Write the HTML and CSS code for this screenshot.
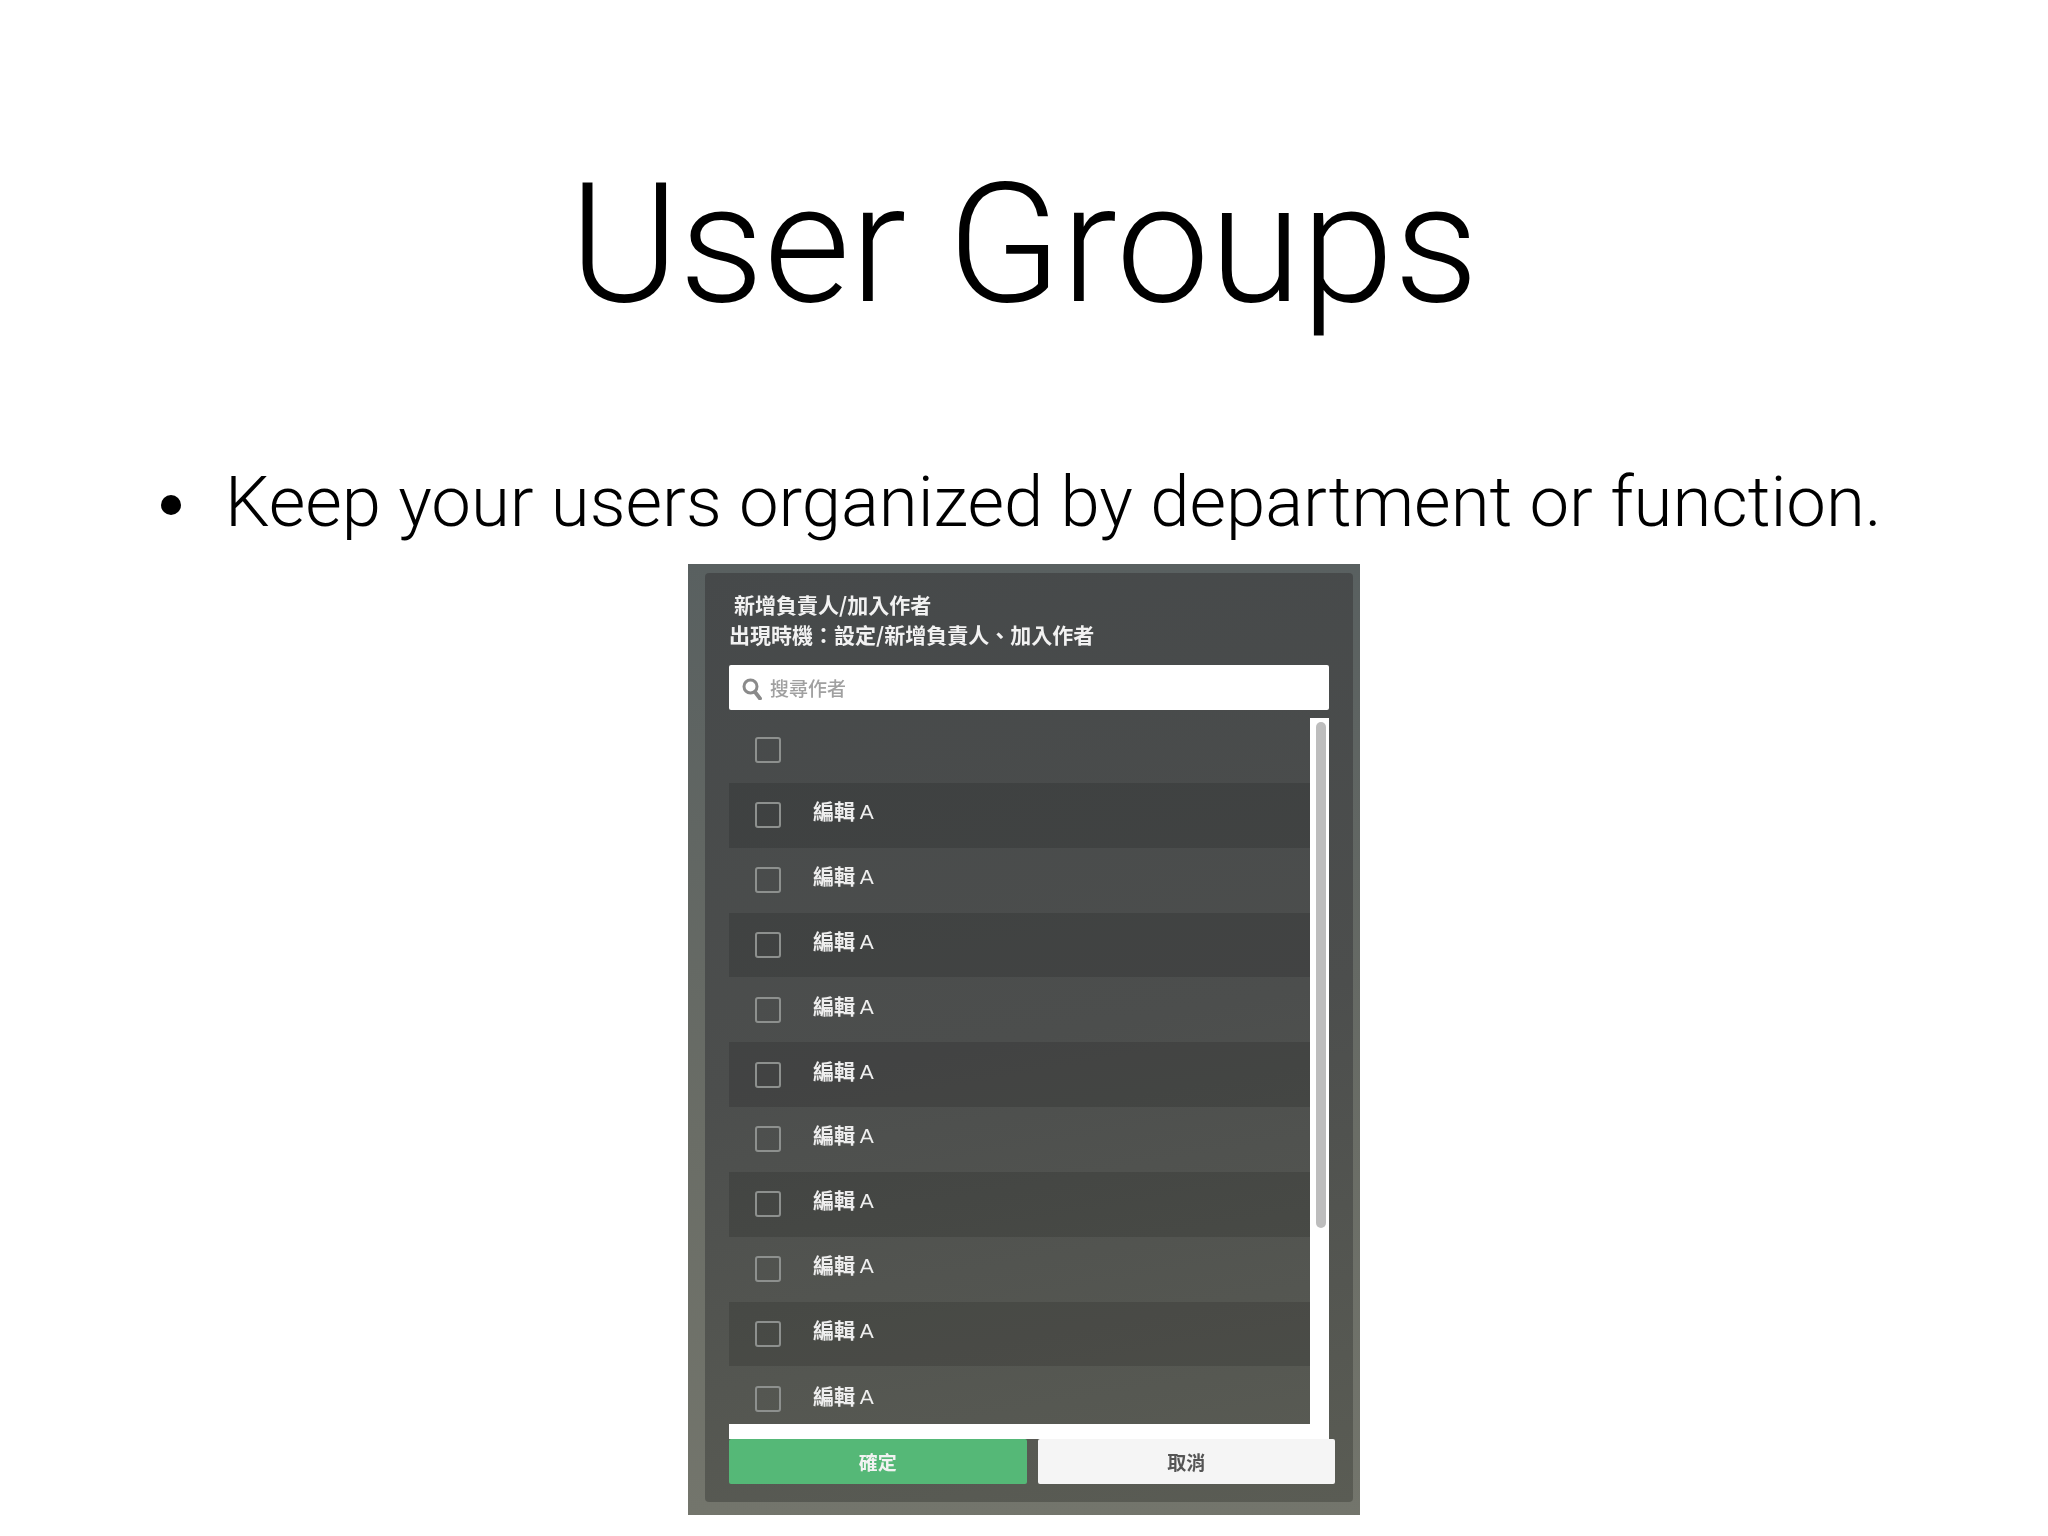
FILE: index.html
```html
<!doctype html>
<html>
  <head>
    <meta charset="utf-8" />
    <title>User Groups</title>
    <link rel="stylesheet" href="styles.css">
  </head>
  <body>
    <div class="slide">
      <h1 class="title">User Groups</h1>
      <ul class="points">
        <li>Keep your users organized by department or function.</li>
      </ul>
      <div class="shot">
        <div class="dialog">
          <p class="dialog-title">新增負責人/加入作者</p>
          <p class="dialog-note">出現時機：設定/新增負責人、加入作者</p>
          <div class="search">
            <svg class="search-icon" viewBox="0 0 20 22" width="20" height="22">
              <circle cx="8.5" cy="8.5" r="6.5" fill="none" stroke="#8a8a8a" stroke-width="3"/>
              <path d="M13 14l5 6.5" fill="none" stroke="#8a8a8a" stroke-width="3.8" stroke-linecap="round"/>
            </svg>
            <span>搜尋作者</span>
          </div>
          <div class="list">
            <div class="rows">
              <div class="row"><span class="check"></span></div>
              <div class="row dark"><span class="check"></span><span class="name">編輯 <span class="latin">A</span></span></div>
              <div class="row"><span class="check"></span><span class="name">編輯 <span class="latin">A</span></span></div>
              <div class="row dark"><span class="check"></span><span class="name">編輯 <span class="latin">A</span></span></div>
              <div class="row"><span class="check"></span><span class="name">編輯 <span class="latin">A</span></span></div>
              <div class="row dark"><span class="check"></span><span class="name">編輯 <span class="latin">A</span></span></div>
              <div class="row"><span class="check"></span><span class="name">編輯 <span class="latin">A</span></span></div>
              <div class="row dark"><span class="check"></span><span class="name">編輯 <span class="latin">A</span></span></div>
              <div class="row"><span class="check"></span><span class="name">編輯 <span class="latin">A</span></span></div>
              <div class="row dark"><span class="check"></span><span class="name">編輯 <span class="latin">A</span></span></div>
              <div class="row last"><span class="check"></span><span class="name">編輯 <span class="latin">A</span></span></div>
            </div>
            <div class="scrollbar"><div class="thumb"></div></div>
          </div>
          <div class="list-end"></div>
          <div class="buttons">
            <div class="btn ok">確定</div>
            <div class="btn cancel">取消</div>
          </div>
        </div>
      </div>
    </div>
  </body>
</html>
```

FILE: styles.css
```css
* { margin: 0; padding: 0; box-sizing: border-box; }
body { background: #fff; color: #000; font-family: Roboto, "Liberation Sans", sans-serif; }
.slide { width: 2048px; height: 1536px; overflow: hidden; padding-top: 149px; }
.title { font-size: 167px; font-weight: 300; line-height: 190px; text-align: center; }
.points { list-style: none; margin-top: 119px; padding-left: 158px; }
.points li { font-size: 70.7px; font-weight: 300; line-height: 88px; position: relative; padding-left: 67px; }
.points li::before { content: ""; position: absolute; left: 3px; top: 37px; width: 20px; height: 20px; border-radius: 50%; background: #000; }

.shot {
  width: 672px;
  height: 951px;
  margin: 18px 0 0 688px;
  padding: 9px 7px 13px 17px;
  background: linear-gradient(180deg, #596060 0%, #6a6d66 60%, #73756c 100%);
  filter: blur(0.7px);
}
.dialog {
  height: 100%;
  padding: 16px 24px 0;
  border-radius: 4px;
  background: linear-gradient(170deg, #46494a 0%, #4c4e4d 50%, #5a5c54 100%);
  color: #fff;
  font-family: "Noto Sans CJK TC", sans-serif;
}
.dialog-title { font-size: 21px; font-weight: 700; line-height: 30px; padding-left: 5px; color: #f2f2f2; }
.dialog-note { font-size: 21px; font-weight: 700; line-height: 30px; color: #f2f2f2; }
.search {
  display: flex;
  align-items: center;
  gap: 8px;
  height: 45px;
  margin-top: 16px;
  padding-left: 13px;
  background: #fff;
  border-radius: 2px;
  color: #a0a0a0;
  font-size: 19px;
  font-weight: 500;
}
.search-icon { flex: none; margin-top: 3px; }
.list { display: flex; margin-top: 8px; }
.rows { flex: 1; }
.row { display: flex; align-items: center; height: 64.85px; padding-left: 26px; }
.row.dark { background: rgba(0, 0, 0, 0.13); }
.row.last { height: 58px; align-items: flex-start; padding-top: 20px; }
.check { width: 26px; height: 26px; border: 2px solid #8d908e; border-radius: 3px; }
.name { margin: 0 0 10px 32px; font-size: 21px; font-weight: 700; color: #eee; }
.row.last .name { margin-top: -6px; }
.latin { font-family: "Liberation Sans", sans-serif; font-weight: 400; }
.scrollbar { width: 19px; padding: 4px 3px 0 6px; background: #fff; }
.thumb { height: 506px; border-radius: 5px; background: #bdbdbd; }
.list-end { height: 15px; background: #fff; }
.buttons { display: flex; gap: 11px; margin-right: -6px; }
.btn { flex: 1; height: 45px; line-height: 45px; text-align: center; font-size: 19px; font-weight: 700; border-radius: 2px; }
.ok { background: #55b877; color: #f2f2f2; }
.cancel { background: #f5f5f5; color: #555; }
```
